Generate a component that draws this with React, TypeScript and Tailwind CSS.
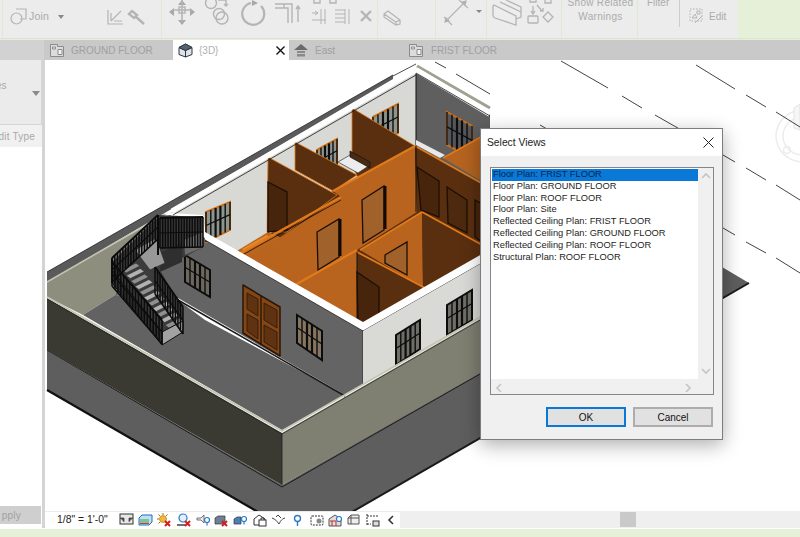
import React from "react";

const FONT = "font-['Liberation_Sans',Arial,sans-serif]";
const ICON = "#b4b4b4";

function P({ d, f, s, w }: { d: string; f: string; s?: string; w?: number }) {
  return <polygon points={d} fill={f} stroke={s ?? "none"} strokeWidth={w ?? 0} strokeLinejoin="round" />;
}
function L({ d, s, w }: { d: string; s: string; w?: number }) {
  return <polyline points={d} fill="none" stroke={s} strokeWidth={w ?? 1} strokeLinejoin="round" />;
}

type Pt = [number, number];
function lerp(a: Pt, b: Pt, t: number): Pt {
  return [a[0] + (b[0] - a[0]) * t, a[1] + (b[1] - a[1]) * t];
}
function str(pts: Pt[]) {
  return pts.map((p) => p.join(",")).join(" ");
}

function Win({ a, b, c, d, glass = "#6f6f68", frame = "#0d0d0d", orange = false }: { a: Pt; b: Pt; c: Pt; d: Pt; glass?: string; frame?: string; orange?: boolean }) {
  const cols = [0, 0.2, 0.4, 0.6, 0.8, 1];
  return (
    <g>
      <polygon points={str([a, b, c, d])} fill={glass} stroke={orange ? "#c86f1c" : frame} strokeWidth={2} />
      {cols.map((t) => {
        const top = lerp(a, b, t);
        const bot = lerp(d, c, t);
        return <line key={t} x1={top[0]} y1={top[1]} x2={bot[0]} y2={bot[1]} stroke={frame} strokeWidth={t === 0.4 || t === 0.6 ? 2.2 : 1.4} />;
      })}
      {[0.45].map((t) => {
        const l = lerp(a, d, t);
        const r = lerp(b, c, t);
        return <line key={t} x1={l[0]} y1={l[1]} x2={r[0]} y2={r[1]} stroke={frame} strokeWidth={1.2} />;
      })}
    </g>
  );
}

function Door({ pts, f, s = "#1c0e05" }: { pts: string; f: string; s?: string }) {
  return <polygon points={pts} fill={f} stroke={s} strokeWidth={1.3} />;
}

function Balusters({ a, b, len, n, w = 1.5 }: { a: Pt; b: Pt; len: number; n: number; w?: number }) {
  const items = Array.from({ length: n + 1 }, (_, i) => i / n);
  return (
    <g>
      {items.map((t) => {
        const p = lerp(a, b, t);
        return <line key={t} x1={p[0]} y1={p[1]} x2={p[0]} y2={p[1] + len} stroke="#0c0c0c" strokeWidth={w} />;
      })}
      <line x1={a[0]} y1={a[1]} x2={b[0]} y2={b[1]} stroke="#0c0c0c" strokeWidth={2} />
      <line x1={a[0]} y1={a[1] + len * 0.5} x2={b[0]} y2={b[1] + len * 0.5} stroke="#0c0c0c" strokeWidth={1.2} />
      <line x1={a[0]} y1={a[1] + len} x2={b[0]} y2={b[1] + len} stroke="#0c0c0c" strokeWidth={1.6} />
    </g>
  );
}

function Treads({ a, b, n, dx, dy }: { a: Pt; b: Pt; n: number; dx: number; dy: number }) {
  return (
    <g>
      {Array.from({ length: n }, (_, i) => {
        const p = lerp(a, b, i / (n - 1));
        return (
          <polygon
            key={i}
            points={`${p[0]},${p[1]} ${p[0] + dx},${p[1] + dy} ${p[0] + dx + 4},${p[1] + dy + 3} ${p[0] + 4},${p[1] + 3}`}
            fill={i % 2 ? "#b2b2b2" : "#8f8f8f"}
            stroke="#222"
            strokeWidth={0.5}
          />
        );
      })}
    </g>
  );
}

function Model() {
  return (
    <svg viewBox="45 60 755 451" className="block w-full h-full" preserveAspectRatio="none">
      {/* view cube ghost */}
      <g fill="none" stroke="#ececec" strokeWidth={1.5}>
        <ellipse cx="803" cy="136" rx="27" ry="26" />
        <ellipse cx="803" cy="136" rx="20" ry="19" />
        <circle cx="787" cy="150" r="3.5" />
      </g>
      <polygon points="794,108 800,104 800,130 794,128" fill="#f6f6f6" stroke="#e2e2e2" />
      {/* grid lines */}
      <g stroke="#2e2e2e" strokeWidth={0.9}>
        <line x1="696" y1="65" x2="735" y2="89" />
        <line x1="746" y1="95" x2="766" y2="107" />
        <line x1="776" y1="112" x2="800" y2="127" />
        <line x1="561" y1="61" x2="608" y2="88" />
        <line x1="622" y1="96" x2="642" y2="108" />
        <line x1="655" y1="115" x2="690" y2="135" />
        <line x1="723" y1="155" x2="735" y2="162" />
        <line x1="746" y1="168" x2="766" y2="180" />
        <line x1="776" y1="185" x2="800" y2="200" />
        <line x1="435" y1="62" x2="446" y2="68" />
        <line x1="456" y1="74" x2="490" y2="94" />
        <line x1="540" y1="125" x2="552" y2="132" />
        <line x1="723" y1="228" x2="735" y2="235" />
        <line x1="746" y1="242" x2="766" y2="253" />
        <line x1="776" y1="258" x2="800" y2="273" />
      </g>

      {/* ground slab */}
      <P d="47,350 47,390 258,512 352,512 749,283 722,267 480,372 282,485" f="#5e5e5e" />
      <L d="47,390 258,512" s="#111" w={2.2} />
      <L d="352,512 749,283" s="#1a1a1a" w={2} />
      <L d="47,350 282,487 480,374" s="#1c1c1c" w={1} />

      {/* terrace: back parapet */}
      <P d="47,272 393,75 393,79 47,282" f="#5a5a5a" />
      <P d="47,282 170,212 150,222 115,295 83,315 47,297" f="#8d8e7e" />
      <L d="47,282 165,214" s="#c3c3b0" w={1.5} />
      <L d="47,272 393,75" s="#222" w={0.8} />
      {/* terrace floor and wall */}
      <P d="83,315 115,295 178,300 205,320 345,395 282,430" f="#626262" />
      <P d="150,222 170,215 205,238 363,330 363,385 345,395 178,298 115,295" f="#646465" />

      {/* interior light wall */}
      <P d="416,72 170,213 203,215 206,238 235,252 416,146" f="#d8d9d5" />
      {/* back-right gray wall */}
      <P d="416,72 490,114 490,190 416,146" f="#5f5f60" />
      <line x1="416" y1="72" x2="416" y2="146" stroke="#111" strokeWidth={1} />
      <Win a={[206, 212]} b={[230, 202]} c={[230, 230]} d={[206, 242]} glass="#8c968f" orange />
      <Win a={[373, 117]} b={[398, 104]} c={[398, 133]} d={[373, 145]} glass="#8c968f" orange />
      <Win a={[317, 150]} b={[337, 139]} c={[337, 165]} d={[317, 176]} glass="#8c968f" orange />
      <Win a={[447, 112]} b={[472, 126]} c={[472, 158]} d={[447, 145]} glass="#55565a" orange />

      {/* base beneath the interior so that no seams show */}
      <P d="240,254 333,191 415,146 482,184 482,262 363,328" f="#5a2f10" />

      {/* orange floor left */}
      <P d="268,232 235,252 293,283 340,263" f="#bb661f" />
      <L d="243,250 268,236" s="#e38a30" w={3} />

      {/* partitions, dark faces */}
      <P d="352,108 415,146 358,178 352,165" f="#5a2f10" s="#e07a1a" w={0.8} />
      <P d="295,142 357,175 333,191 295,170" f="#5a2f10" s="#e07a1a" w={0.8} />
      <P d="268,157 337,195 287,232 267,232" f="#5a2f10" s="#e07a1a" w={0.8} />
      <Door pts="268,182 287,192 287,230 268,232" f="#47250c" />
      {/* bed */}
      <P d="338,162 350,155 370,165 358,173" f="#ececec" s="#333" w={0.7} />
      <P d="350,151 370,162 370,168 350,157" f="#4a2a12" s="#111" w={0.7} />
      <P d="416,140 445,155 440,158 416,145" f="#e9e9e9" />

      {/* back right room */}
      <P d="490,132 443,158 490,186" f="#b5631f" />
      <L d="443,158 490,132" s="#e07a1a" w={1.6} />

      {/* large lit wall */}
      <P d="415,146 417,212 357,250 295,287 247,259 341,197 333,191" f="#b8641f" />
      <L d="333,191 415,146" s="#e07a1a" w={2} />
      <L d="237,255 341,197" s="#e07a1a" w={2.4} />
      <L d="237,258 341,200" s="#1e0f04" w={0.8} />
      <Door pts="362,200 384,186 384,230 363,243" f="#a0622a" />
      <line x1="385" y1="186" x2="385" y2="229" stroke="#150a03" strokeWidth={3} />
      <Door pts="317,232 339,219 339,257 318,270" f="#a0622a" />
      <line x1="340" y1="219" x2="340" y2="256" stroke="#150a03" strokeWidth={3} />

      {/* back long dark wall */}
      <P d="415,146 490,188 490,250 422,212 417,212" f="#5a2f10" />
      <L d="415,146 490,188" s="#e07a1a" w={1.6} />
      <line x1="416" y1="146" x2="416" y2="212" stroke="#111" strokeWidth={1} />
      <Door pts="417,167 439,181 439,217 421,210" f="#47250c" />
      <Door pts="447,187 467,200 467,233 448,223" f="#4c290f" />
      <Door pts="475,200 482,204 482,242 475,237" f="#47250c" />

      {/* lower rooms */}
      <P d="422,212 423,288 360,250" f="#b8641f" />
      <Door pts="385,255 407,242 407,275 385,263" f="#a0622a" />
      <P d="422,212 484,246 484,262 423,288" f="#5a2f10" />
      <L d="422,212 484,246" s="#e07a1a" w={1.8} />
      <L d="360,250 422,212" s="#e07a1a" w={1.8} />
      <P d="357,250 357,326 295,286" f="#b8641f" />
      <L d="295,285 357,250" s="#e07a1a" w={2.2} />
      <P d="357,252 425,288 377,318 358,326" f="#5a2f10" />
      <L d="357,252 425,288" s="#e07a1a" w={1.8} />
      <line x1="357" y1="252" x2="357" y2="325" stroke="#111" strokeWidth={1} />
      <Door pts="357,272 379,287 379,317 358,325" f="#47250c" />

      {/* caps */}
      <P d="205,232 363,322 482,254 482,263 363,331 205,240" f="#ffffff" />
      <L d="205,240 363,331 482,263" s="#222" w={0.8} />
      <L d="172,211 416,70" s="#ffffff" w={5} />
      <L d="173,215 416,75" s="#1a1a1a" w={0.8} />
      <L d="393,75 417,65 490,107" s="#ffffff" w={1} />
      <L d="417,66 490,108" s="#a0a190" w={3} />
      <L d="416,70 490,114" s="#ffffff" w={6} />
      <L d="416,73 490,116" s="#1a1a1a" w={0.8} />
      <L d="393,76 416,64" s="#222" w={0.8} />

      {/* gray wall front details */}
      <Win a={[185, 255]} b={[210, 270]} c={[210, 297]} d={[185, 282]} glass="#6b695f" />
      <Win a={[297, 315]} b={[322, 331]} c={[322, 360]} d={[297, 343]} glass="#857561" />
      <P d="243,285 280,307 280,356 243,333" f="#824617" s="#2b1606" w={1.5} />
      <line x1="261" y1="296" x2="261" y2="345" stroke="#2b1606" strokeWidth={1.4} />
      <P d="247,293 258,299 258,316 247,309" f="#5f3212" s="#2b1606" w={0.8} />
      <P d="264,303 277,310 277,328 264,320" f="#5f3212" s="#2b1606" w={0.8} />
      <P d="247,314 258,320 258,339 247,331" f="#5f3212" s="#2b1606" w={0.8} />
      <P d="264,325 277,332 277,350 264,342" f="#5f3212" s="#2b1606" w={0.8} />
      <L d="178,300 345,396" s="#1a1a1a" w={1.6} />
      <line x1="363" y1="330" x2="363" y2="385" stroke="#222" strokeWidth={0.8} />

      {/* white right face */}
      <P d="363,331 482,263 482,318 363,385" f="#d9dad6" />
      <Win a={[396, 335]} b={[420, 320]} c={[420, 349]} d={[396, 365]} />
      <Win a={[447, 305]} b={[472, 290]} c={[472, 320]} d={[447, 335]} />

      {/* stairs */}
      <P d="158,215 203,217 203,247 160,270 150,250" f="#3a3a3a" />
      <P d="184,240 203,232 203,247 185,255" f="#6c6c6c" />
      <P d="160,253 182,243 182,262 160,272" f="#2f2f2f" />
      <P d="112,262 158,217 160,270 183,310 183,332 162,345 112,283" f="#3c3c3c" />
      <P d="135,250 156,238 165,263 150,270" f="#989898" s="#222" w={0.6} />
      <Treads a={[122, 270]} b={[165, 325]} n={11} dx={14} dy={-7} />
      <P d="162,332 183,321 183,332 162,345" f="#a2a2a2" s="#111" w={1} />
      <P d="112,270 162,332 162,345 112,283" f="#2f2f2f" s="#111" w={1} />
      <Balusters a={[112, 258]} b={[158, 215]} len={24} n={17} />
      <Balusters a={[160, 218]} b={[203, 217]} len={30} n={16} />
      <Balusters a={[112, 262]} b={[162, 320]} len={24} n={17} />
      <Balusters a={[155, 267]} b={[183, 307]} len={27} n={11} />
      <line x1="158" y1="215" x2="158" y2="255" stroke="#0a0a0a" strokeWidth={2} />
      <line x1="112" y1="258" x2="112" y2="283" stroke="#0a0a0a" strokeWidth={2} />

      {/* front parapet */}
      <P d="47,298 282,433 282,485 47,350" f="#3a3a33" />
      <P d="282,433 482,318 482,372 282,485" f="#7f8072" />
      <L d="47,297 282,431 482,316" s="#c5c6b2" w={2} />
      <L d="47,299 282,434 482,319" s="#222" w={0.7} />
      <line x1="282" y1="433" x2="282" y2="485" stroke="#1c1c1c" strokeWidth={0.8} />
    </svg>
  );
}

function Join() {
  return (
    <svg width="18" height="18" viewBox="0 0 18 18" fill="none" stroke={ICON} strokeWidth={1.2}>
      <path d="M6 2h10v10H10" />
      <circle cx="6.5" cy="11.5" r="5.5" />
    </svg>
  );
}

function Section({ w, children, line = true }: { w: string; children?: React.ReactNode; line?: boolean }) {
  return <div className={`${w} h-full shrink-0 flex items-start ${line ? "border-r border-[#dfe8d2]" : ""}`}>{children}</div>;
}

function Ribbon() {
  return (
    <div className="h-[39px] flex bg-[#ececec] shrink-0 border-b border-[#dbe8c8] overflow-hidden">
      <Section w="w-[3px]" />
      <Section w="w-[159px]">
        <div className="ml-[7px] mt-[7px]"><Join /></div>
        <span className="ml-[1px] mt-[8px] w-[21px] text-[10.500px] leading-[17px] tracking-[0.2px] text-[#aaaaaa]">Join</span>
        <svg className="ml-[8px] mt-[15px]" width="6" height="4" viewBox="0 0 6 4"><path d="M0 0h6L3 4z" fill="#888" /></svg>
        <svg className="ml-[43px] mt-[8px]" width="40" height="18" viewBox="0 0 40 18" fill="none" stroke={ICON} strokeWidth={1.2}>
          <path d="M1 2v14h15M4 5v8M7 13h8M4 13l10-10" />
          <path d="M25 3l5 4-3 3-5-4zM28 8l9 8" strokeWidth={2.4} />
        </svg>
      </Section>
      <Section w="w-[216px]">
        <svg width="215" height="38" viewBox="162 0 215 38" fill="none" stroke={ICON} strokeWidth={1.4}>
          <path d="M182 0l-4 5h8zM182 25l-4-5h8zM169 12l5-4v8zM195 12l-5-4v8z" fill="#a8a8a8" stroke="none" />
          <rect x="179" y="7" width="6" height="6" />
          <path d="M182 0v22M172 10h20" strokeWidth={1.6} />
          <circle cx="211" cy="3" r="5.5" />
          <circle cx="219" cy="14" r="5.5" />
          <circle cx="222" cy="18" r="6" />
          <path d="M218 0h8v5M224 4l2 2 2-2" />
          <path d="M251 3a11 11 0 1 0 10 3" strokeWidth={2.2} />
          <path d="M252 0l6 3-6 3z" fill="#a8a8a8" stroke="none" />
          <path d="M275 4h17v19M275 8h13v15M284 4v4" />
          <path d="M298 22V7M296 9l2-3 2 3" />
          <path d="M312 13h6M315 11l3 2-3 2M312 20h14M325 9v15M321 9v15" strokeWidth={1} />
          <path d="M335 10h10M335 14h10M335 18h10M335 22h10M349 9v15M345 9v15" strokeWidth={1} />
          <path d="M361 11l10 10M371 11l-10 10" strokeWidth={2.4} />
          <path d="M314 0v3h6V0M330 0v3h6V0" />
        </svg>
      </Section>
      <Section w="w-[58px]">
        <svg className="ml-[5px] mt-[8px]" width="18" height="18" viewBox="0 0 18 18" fill="none" stroke={ICON} strokeWidth={1.2}>
          <path d="M1 6l4-3 12 9v4l-4 1L1 9zM1 6l12 8v3M13 14l4-2" />
        </svg>
      </Section>
      <Section w="w-[51px]">
        <svg width="50" height="38" viewBox="436 0 50 38" fill="none" stroke={ICON} strokeWidth={1.2}>
          <path d="M445 22l21-21M444 17l8 8M459 0l9 8" />
          <path d="M445 22l4-1-3-3zM466 1l-4 1 3 3z" fill="#aaa" />
          <path d="M476 10h6l-3 3z" fill="#888" stroke="none" />
        </svg>
      </Section>
      <Section w="w-[75px]">
        <svg width="74" height="38" viewBox="487 0 74 38" fill="none" stroke={ICON} strokeWidth={1.3}>
          <path d="M494 5l22 11v9l-21-7q-2-1-2-3V6zM500 2l21 10M506 0l15 7v10l-5 2" fill="#ededed" />
          <rect x="528" y="16" width="10" height="7" rx="1" />
          <path d="M530 0v2h6V0M551 0v3h-6V0M533 6v7M531 11l2 3 2-3M537 5l5 6M543 8v3h-3" />
          <path d="M548 12l5 5-5 5-5-5z" />
        </svg>
      </Section>
      <Section w="w-[76px]">
        <div className="w-full pl-[2px] text-center text-[10px] leading-[14px] tracking-[0.3px] whitespace-nowrap text-[#ababab] mt-[-4px]">Show Related<br />Warnings</div>
      </Section>
      <Section w="w-[100px]" line={false}>
        <span className="ml-[9px] mt-[-4px] w-[23px] text-[10px] leading-[14px] text-[#ababab]">Filter</span>
        <div className="ml-[9px] w-px h-[27px] bg-[#cccccc]" />
        <svg className="ml-[9px] mt-[8px]" width="15" height="17" viewBox="0 0 15 17" fill="none" stroke={ICON} strokeWidth={1}>
          <rect x="1" y="1" width="12" height="12" strokeDasharray="1.6 1.4" />
          <path d="M3 10l3-4 2 4zM8 3h3v3H8zM6 15l7-7" />
        </svg>
        <span className="ml-[5px] mt-[8px] text-[10px] leading-[17px] text-[#ababab]">Edit</span>
      </Section>
      <div className="flex-1 bg-[#e6efd8] -mb-px" />
    </div>
  );
}

function PlanIcon() {
  return (
    <svg width="14" height="13" viewBox="0 0 14 13" fill="#dcdcdc" stroke="#8b8b8b" strokeWidth={1}>
      <path d="M.5.5h7v2h6v10H.5z" />
      <path d="M8 5.500h4v5H8zM2.500 3h3v2h-3z" fill="#f3f3f3" />
    </svg>
  );
}

function Tab({ w, icon, label, active, close, gap = "ml-[7px]" }: { w: string; icon: React.ReactNode; label: string; active?: boolean; close?: boolean; gap?: string }) {
  return (
    <div className={`${w} h-full flex items-center shrink-0 pl-[5px] ${active ? "bg-white" : ""}`}>
      {icon}
      <span className={`${gap} text-[10px] whitespace-nowrap ${active ? "text-[#b0b0b0]" : "text-[#a0a0a0]"}`}>{label}</span>
      {close && (
        <svg className="ml-auto mr-[4px]" width="9" height="9" viewBox="0 0 9 9" stroke="#111" strokeWidth={1.4}>
          <path d="M.5.500l8 8M8.500.500l-8 8" />
        </svg>
      )}
    </div>
  );
}

function Tabs() {
  return (
    <div className="h-[20px] flex bg-[#c9c9c9] shrink-0">
      <div className="w-[45px] h-full bg-[#d2d2d2] shrink-0 border-r border-[#c9c9c9]" />
      <Tab w="w-[128px]" icon={<PlanIcon />} label="GROUND FLOOR" />
      <Tab
        w="w-[116px]"
        active
        close
        gap="ml-[6px]"
        icon={
          <svg width="15" height="15" viewBox="0 0 15 15" stroke="#2b3642" strokeWidth={1} fill="#dfe3e8">
            <path d="M7.500 1L14 4.500v7L7.500 14 1 11.500v-7z" />
            <path d="M1 4.500l6.500 3 6.500-3M7.500 7.500V14" fill="none" />
            <path d="M1 4.500l6.500-3.500 6.500 3.500-6.500 3z" fill="#55636f" />
          </svg>
        }
        label="{3D}"
      />
      <Tab
        w="w-[115px]"
        gap="ml-[7px]"
        icon={
          <svg width="14" height="13" viewBox="0 0 14 13">
            <path d="M7 0l7 6H0z" fill="#6a6a6a" />
            <path d="M3 7h8v2H3zM3 10h8v2.500H3z" fill="#8a8a8a" />
          </svg>
        }
        label="East"
      />
      <Tab w="w-[130px]" gap="ml-[8px]" icon={<PlanIcon />} label="FRIST FLOOR" />
    </div>
  );
}

function LeftPanel() {
  return (
    <div className="w-[45px] shrink-0 flex flex-col bg-white border-r-[3px] border-[#d4d4d4] overflow-hidden">
      <div className="h-[65px] bg-[#ebebeb] border-b border-r border-[#d6d6d6] flex items-center pr-[1px]">
        <span className="ml-[-4px] mt-[-12px] text-[10px] leading-[12px] text-[#a9a9a9]">es</span>
        <svg className="ml-auto mt-[2px] shrink-0" width="8" height="5" viewBox="0 0 8 5"><path d="M0 0h8L4 5z" fill="#8a8a8a" /></svg>
      </div>
      <div className="h-[22px] bg-[#f1f1f1] flex items-center justify-end pr-[7px] overflow-hidden">
        <span className="text-[10px] tracking-[0.2px] whitespace-nowrap text-[#a9a9a9]">dit Type</span>
      </div>
      <div className="flex-1" />
      <div className="h-[18px] mb-[4px] bg-[#cfcfcf] mr-[1px] flex items-center justify-end pr-[20px] overflow-hidden">
        <span className="text-[10px] tracking-[0.2px] text-[#a0a0a0]">pply</span>
      </div>
    </div>
  );
}

const VIEWS = [
  "Floor Plan: FRIST FLOOR",
  "Floor Plan: GROUND FLOOR",
  "Floor Plan: ROOF FLOOR",
  "Floor Plan: Site",
  "Reflected Ceiling Plan: FRIST FLOOR",
  "Reflected Ceiling Plan: GROUND FLOOR",
  "Reflected Ceiling Plan: ROOF FLOOR",
  "Structural Plan: ROOF FLOOR",
];

function Chevron({ dir }: { dir: "up" | "down" | "left" | "right" }) {
  const d = { up: "M1 6l4-4 4 4", down: "M1 2l4 4 4-4", left: "M6 1L2 5l4 4", right: "M2 1l4 4-4 4" }[dir];
  return (
    <svg width="10" height="10" viewBox="0 0 10 8" fill="none" stroke="#c4c4c4" strokeWidth={1.6}>
      <path d={d} />
    </svg>
  );
}

function Dialog() {
  return (
    <div className="absolute left-[435px] top-[68px] w-[243px] h-[312px] bg-[#f0f0f0] border border-[#7d7d7d] shadow-[0_5px_18px_rgba(0,0,0,0.32)] flex flex-col">
      <div className="h-[27px] bg-white flex items-center justify-between shrink-0 pl-[6px] pr-[8px]">
        <span className="text-[10.300px] text-[#222]">Select Views</span>
        <svg width="11" height="11" viewBox="0 0 11 11" stroke="#222" strokeWidth={1}>
          <path d="M.5.500l10 10M10.500.500l-10 10" />
        </svg>
      </div>
      <div className="ml-[9px] mr-[8px] mt-[11px] h-[228px] border border-[#82878f] bg-[#f0f0f0] flex flex-wrap shrink-0">
        <div className="w-[207px] h-[211px] bg-white pt-px pl-px">
          {VIEWS.map((v, i) => (
            <div key={v} className={`h-[11.800px] leading-[11.800px] text-[9.300px] whitespace-nowrap pl-[1px] ${i === 0 ? "bg-[#0a78d7] text-[#06264a]" : "text-[#1d1d1d]"}`}>
              {v}
            </div>
          ))}
        </div>
        <div className="w-[15px] h-[211px] flex flex-col items-center justify-between py-[3px]">
          <Chevron dir="up" />
          <Chevron dir="down" />
        </div>
        <div className="w-full h-[15px] flex items-center justify-between pl-[4px] pr-[19px]">
          <Chevron dir="left" />
          <Chevron dir="right" />
        </div>
      </div>
      <div className="flex justify-end gap-[7px] mt-[12px] mr-[9px]">
        <div className="w-[80px] h-[20px] bg-[#e1e1e1] border-2 border-[#0a78d7] text-[10px] text-[#111] flex items-center justify-center">OK</div>
        <div className="w-[80px] h-[20px] bg-[#e1e1e1] border-2 border-[#adadad] text-[10px] text-[#111] flex items-center justify-center">Cancel</div>
      </div>
    </div>
  );
}

function St({ children, ml = "ml-[5px]" }: { children: React.ReactNode; ml?: string }) {
  return (
    <svg width="15" height="14" viewBox="0 0 15 14" className={`${ml} shrink-0`}>
      {children}
    </svg>
  );
}

function StatusBar() {
  const red = <path d="M8 8l5 5M13 8l-5 5" stroke="#d21f1f" strokeWidth={2} fill="none" />;
  const blue = "#2a7ac7";
  const k = "#333";
  return (
    <div className="h-[17px] flex shrink-0">
      <div className="w-[355px] shrink-0 flex items-center bg-white border-t border-[#ececec]">
        <span className="ml-[12px] w-[62px] text-[10.400px] text-[#222] whitespace-nowrap shrink-0">1/8" = 1'-0"</span>
        <St ml="ml-0">
          <rect x="1" y="1" width="13" height="10" fill="#e8e8e8" stroke={k} />
          <path d="M1 5h4v4M14 5h-4v4" fill="#555" stroke={k} strokeWidth={0.7} />
        </St>
        <St ml="ml-[4px]">
          <path d="M1 5l3-3h10v7l-3 3H1z" fill="#bfe0f5" stroke="#1f6fb5" />
          <path d="M2 7h9M2 9h9" stroke="#3aa64a" strokeWidth={1} />
          <path d="M2 10.500h9" stroke="#d43a3a" strokeWidth={1} />
        </St>
        <St ml="ml-[4px]">
          <circle cx="6" cy="6" r="3.500" fill="#f3b73a" stroke="#a66d10" strokeWidth={0.6} />
          <path d="M6 0v2M0 6h2M1.500 1.500l1.500 1.500M10.500 1.500L9 3M1.500 10.500L3 9" stroke="#a66d10" />
          {red}
        </St>
        <St ml="ml-[5px]">
          <circle cx="6" cy="5" r="4" fill="#e3f0fb" stroke={blue} strokeWidth={1.2} />
          <path d="M0 12h8" stroke={k} strokeWidth={1.4} />
          {red}
        </St>
        <St ml="ml-[4px]">
          <path d="M1 5h4l3-3v8L5 7H1z" fill="#eee" stroke="#555" strokeWidth={0.8} />
          <circle cx="11" cy="7" r="2.500" fill="none" stroke={blue} strokeWidth={1.2} />
          <path d="M11 9.500v3" stroke={blue} strokeWidth={1.2} />
        </St>
        <St ml="ml-[3px]">
          <path d="M1 5l3-2h7v8H1z" fill="#6f7f96" stroke="#333" strokeWidth={0.7} />
          {red}
        </St>
        <St ml="ml-[4px]">
          <path d="M1 6l3-2h4v7H1z" fill="#4d7fb5" stroke="#333" strokeWidth={0.7} />
          <circle cx="11" cy="6" r="2.500" fill="#fff" stroke={blue} strokeWidth={1.2} />
          <path d="M11 8.500v3" stroke={blue} strokeWidth={1.2} />
        </St>
        <St ml="ml-[4px]">
          <path d="M2 6l5-4 6 4v6H2z" fill="none" stroke={k} />
          <rect x="7" y="7" width="7" height="6" fill="#fff" stroke={k} />
          <path d="M9 7V5h3v2" fill="none" stroke={k} />
        </St>
        <St ml="ml-[4px]">
          <path d="M1 5c3 1 5 3 7 6M8 11c2-4 3-5 6-6M5 4l2-2 3 3" fill="none" stroke="#444" />
        </St>
        <svg className="ml-[7px] shrink-0" width="9" height="13" viewBox="0 0 9 13">
          <circle cx="4.500" cy="4.500" r="3" fill="#fff" stroke={blue} strokeWidth={1.4} />
          <path d="M4.500 8v4" stroke={blue} strokeWidth={1.4} />
        </svg>
        <St ml="ml-[8px]">
          <rect x="1" y="3" width="12" height="9" rx="1" fill="none" stroke={k} strokeDasharray="2 1" />
          <circle cx="9" cy="8" r="2.500" fill="#888" />
        </St>
        <St ml="ml-[3px]">
          <path d="M1 6l6-4 6 4v7H1z" fill="#ddd" stroke="#555" />
          <path d="M2 8h6v5M4 8v5" stroke="#c72b2b" fill="none" />
          <circle cx="11" cy="6" r="2.500" fill="#fff" stroke={blue} strokeWidth={1.2} />
        </St>
        <St ml="ml-[4px]">
          <path d="M1 5l3-3h8v9H1z" fill="#eee" stroke="#555" />
          <path d="M4 2v9M1 5h11" stroke="#555" />
        </St>
        <St ml="ml-[3px]">
          <path d="M2 1v12M2 3h11M2 11h4" stroke="#333" strokeDasharray="2 1" fill="none" />
          <rect x="8" y="8" width="6" height="5" fill="#ddd" stroke="#333" />
        </St>
        <svg className="ml-[7px] shrink-0" width="7" height="10" viewBox="0 0 7 10" fill="none" stroke="#333" strokeWidth={1.6}>
          <path d="M6 1L2 5l4 4" />
        </svg>
      </div>
      <div className="flex-1 bg-[#efefef] flex items-stretch pl-[220px] py-px">
        <div className="w-[16px] bg-[#c9c9c9]" />
      </div>
    </div>
  );
}

export default function App() {
  return (
    <div className={`w-[800px] h-[537px] overflow-hidden flex flex-col bg-white ${FONT}`}>
      <Ribbon />
      <div className="h-px bg-[#e9e9e9] shrink-0" />
      <Tabs />
      <div className="flex-1 min-h-0 flex">
        <LeftPanel />
        <div className="flex-1 min-w-0 flex flex-col">
          <div className="flex-1 min-h-0 relative bg-white">
            <div className="w-full h-full overflow-hidden"><Model /></div>
            <Dialog />
          </div>
          <StatusBar />
        </div>
      </div>
      <div className="h-[9px] shrink-0 bg-[#e6efd8] border-t border-white" />
    </div>
  );
}
